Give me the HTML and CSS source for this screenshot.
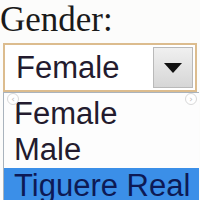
FILE: index.html
```html
<!DOCTYPE html>
<html lang="en">
<head>
    <meta charset="UTF-8">
    <title>Gender select</title>
    <link rel="stylesheet" href="styles.css">
</head>
<body>
    <div class="label">Gender:</div>

    <div class="select">
        <div class="select-value">Female</div>
        <div class="select-button"><span class="arrow"></span></div>
    </div>

    <div class="list">
        <div class="option">Female</div>
        <div class="option">Male</div>
        <div class="option selected">Tiguere Real</div>

        <!-- viewer overlay controls -->
        <span class="nav nav-prev">&lsaquo;</span>
        <span class="nav nav-next">&rsaquo;</span>
        <div class="dots">
            <span></span><span></span><span></span><span></span><span class="active"></span><span></span>
        </div>
    </div>
</body>
</html>
```

FILE: styles.css
```css
body {
    margin: 0;
    background-color: #fcfcfb;
    width: 200px;
    height: 200px;
    overflow: hidden;
}
.label {
    font-family: "Liberation Serif", serif;
    font-size: 35px;
    line-height: 40px;
    color: #1a1a1a;
    height: 43px;
}
.select {
    display: flex;
    margin-left: 3px;
    width: 190px;
    height: 45px;
    border: 2px solid #dcbc8e;
    background-color: #fff;
}
.select-value {
    flex: 1;
    font-family: "Liberation Sans", Arial, sans-serif;
    font-size: 31px;
    line-height: 46px;
    color: #231b2e;
    padding-left: 11px;
}
.select-button {
    width: 38px;
    margin: 2px;
    border: 1px solid #b9b9b9;
    background: linear-gradient(#f0f0f0, #d6d6d6);
    display: flex;
    align-items: center;
    justify-content: center;
}
.arrow {
    width: 0;
    height: 0;
    border-left: 9px solid transparent;
    border-right: 9px solid transparent;
    border-top: 10px solid #111;
}
.list {
    position: relative;
    margin-left: 3px;
    width: 195px;
    padding-top: 3px;
    border: 1px solid #a9b3bd;
    border-right: none;
    background-color: #fdfdfd;
}
.option {
    font-family: "Liberation Sans", Arial, sans-serif;
    font-size: 31px;
    line-height: 36px;
    height: 36px;
    color: #231b2e;
    padding-left: 10px;
}
.option.selected {
    background-color: #3b8fe8;
    color: #0d1a55;
}
.nav {
    position: absolute;
    top: 0;
    width: 10px;
    height: 10px;
    border: 1px solid #d8d8d8;
    border-radius: 50%;
    font-family: "DejaVu Sans", sans-serif;
    font-size: 9px;
    line-height: 10px;
    text-align: center;
    color: #bbb;
    background-color: #fff;
}
.nav-prev {
    left: 3px;
}
.nav-next {
    right: 2px;
}
.dots {
    position: absolute;
    left: 86px;
    bottom: 2px;
    display: flex;
    gap: 3px;
}
.dots span {
    width: 2px;
    height: 2px;
    background-color: #c8dcf4;
}
.dots .active {
    width: 4px;
    background-color: #fff;
}
```
